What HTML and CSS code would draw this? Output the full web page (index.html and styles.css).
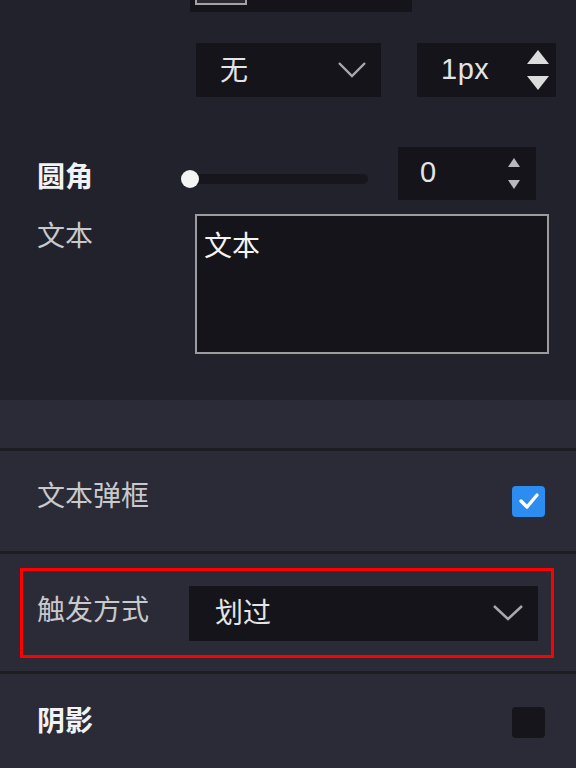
FILE: index.html
```html
<!DOCTYPE html>
<html lang="zh-CN">
<head>
  <meta charset="UTF-8">
  <meta name="viewport" content="width=device-width, initial-scale=1.0">
  <title>属性面板</title>
  <link rel="stylesheet" href="styles.css">
</head>
<body>
  <div class="panel">
    <div class="style-section">
      <div class="color-row">
        <div class="color-field">
          <span class="swatch"></span>
        </div>
      </div>

      <div class="border-row">
        <div class="select select-small">
          <span class="select-value">无</span>
          <svg class="chevron" width="30" height="18" viewBox="0 0 30 18">
            <polyline points="2,2 15,15 28,2" fill="none" stroke="#a9a9ad" stroke-width="2.4"/>
          </svg>
        </div>
        <div class="number number-wide">
          <span class="number-value">1px</span>
          <div class="spinner">
            <svg width="24" height="16" viewBox="0 0 24 16"><polygon points="12,1 23,15 1,15" fill="#dcdcdc"/></svg>
            <svg width="24" height="16" viewBox="0 0 24 16"><polygon points="1,1 23,1 12,15" fill="#dcdcdc"/></svg>
          </div>
        </div>
      </div>

      <div class="field-row radius-row">
        <label class="label strong">圆角</label>
        <div class="slider">
          <span class="slider-thumb"></span>
        </div>
        <div class="number number-radius">
          <span class="number-value">0</span>
          <div class="spinner spinner-small">
            <svg width="12" height="9" viewBox="0 0 12 9"><polygon points="6,0 12,9 0,9" fill="#b9b9bd"/></svg>
            <svg width="12" height="9" viewBox="0 0 12 9"><polygon points="0,0 12,0 6,9" fill="#b9b9bd"/></svg>
          </div>
        </div>
      </div>

      <div class="field-row text-row">
        <label class="label">文本</label>
        <div class="textarea">文本</div>
      </div>
    </div>

    <div class="band"></div>

    <div class="option-row">
      <span class="label">文本弹框</span>
      <span class="checkbox checked">
        <svg width="22" height="18" viewBox="0 0 22 18">
          <polyline points="3,9 9,15 19,3" fill="none" stroke="#fff" stroke-width="3.4" stroke-linecap="round" stroke-linejoin="round"/>
        </svg>
      </span>
    </div>

    <div class="option-row trigger-row">
      <div class="highlight">
        <span class="label">触发方式</span>
        <div class="select select-trigger">
          <span class="select-value">划过</span>
          <svg class="chevron" width="32" height="18" viewBox="0 0 32 18">
            <polyline points="2,2 16,15 30,2" fill="none" stroke="#a9a9ad" stroke-width="2.4"/>
          </svg>
        </div>
      </div>
    </div>

    <div class="option-row shadow-row">
      <span class="label strong">阴影</span>
      <span class="checkbox"></span>
    </div>
  </div>
</body>
</html>
```

FILE: styles.css
```css
* {
  margin: 0;
  padding: 0;
  box-sizing: border-box;
}
body {
  font-family: "Noto Sans CJK SC", "Noto Sans", sans-serif;
  background-color: #2b2b37;
  width: 576px;
  height: 768px;
  overflow: hidden;
}
.panel {
  width: 576px;
}
.style-section {
  background-color: #22222c;
  height: 400px;
}
.color-row {
  padding-left: 190px;
}
.color-field {
  width: 222px;
  height: 12px;
  background-color: #14141a;
  padding-left: 5px;
}
.swatch {
  display: block;
  width: 52px;
  height: 5px;
  background-color: #2a2a30;
  border: 2px solid #a3a3a6;
  border-top: none;
}
.border-row {
  display: flex;
  gap: 36px;
  margin-top: 31px;
  padding-left: 196px;
}
.select,
.number {
  display: flex;
  align-items: center;
  background-color: #14141a;
  height: 54px;
  color: #e4e4e6;
  font-size: 28px;
}
.select-value {
  line-height: 1;
  margin-top: -5px;
}
.select-small {
  width: 185px;
  padding: 0 14px 0 24px;
  justify-content: space-between;
}
.number-wide {
  width: 139px;
  padding: 0 6px 0 24px;
  justify-content: space-between;
}
.number-value {
  font-family: "Liberation Sans", Arial, sans-serif;
  font-size: 29px;
  letter-spacing: 0.5px;
  margin-top: -2px;
}
.spinner {
  display: flex;
  flex-direction: column;
  gap: 10px;
}
.spinner svg {
  display: block;
}
.field-row {
  display: flex;
  padding-left: 37px;
}
.label {
  font-size: 28px;
  line-height: 1;
  color: #c9c9cc;
}
.label.strong {
  color: #f2f2f4;
  font-weight: bold;
}
.radius-row {
  margin-top: 50px;
  align-items: center;
  height: 53px;
}
.radius-row .label {
  width: 144px;
  padding-top: 3px;
}
.slider {
  position: relative;
  width: 178px;
  height: 10px;
  margin-left: 9px;
  margin-top: 10px;
  background-color: #16161c;
  border-radius: 5px;
}
.slider-thumb {
  position: absolute;
  left: -9px;
  top: -4px;
  width: 18px;
  height: 18px;
  border-radius: 50%;
  background-color: #f4f4f4;
}
.number-radius {
  width: 138px;
  height: 53px;
  margin-left: 30px;
  padding: 0 16px 0 22px;
  justify-content: space-between;
}
.spinner-small {
  gap: 13px;
}
.text-row {
  margin-top: 14px;
}
.text-row .label {
  width: 158px;
  padding-top: 6px;
}
.textarea {
  width: 354px;
  height: 140px;
  background-color: #14141a;
  border: 2px solid #9c9ca0;
  color: #f4f4f4;
  font-size: 28px;
  padding: 14px 7px;
  line-height: 1;
}
.band {
  height: 48px;
  background-color: #2b2b37;
}
.option-row {
  display: flex;
  align-items: center;
  justify-content: space-between;
  background-color: #2b2b37;
  border-top: 3px solid #1d1d24;
  height: 103px;
  padding: 0 31px 0 37px;
}
.option-row .label {
  margin-top: -15px;
}
.checkbox {
  display: flex;
  align-items: center;
  justify-content: center;
  width: 33px;
  height: 31px;
  border-radius: 4px;
  background-color: #15151b;
}
.checkbox.checked {
  background-color: #2d8cf0;
}
.trigger-row {
  height: 120px;
  padding: 0 22px 0 20px;
  align-items: flex-start;
}
.highlight {
  display: flex;
  align-items: center;
  width: 534px;
  height: 90px;
  margin-top: 14px;
  border: 3px solid #ff0000;
  padding: 0 13px 0 14px;
}
.highlight .label {
  width: 152px;
  margin-top: -10px;
}
.select-trigger {
  width: 349px;
  height: 55px;
  padding: 0 14px 0 26px;
  justify-content: space-between;
}
.shadow-row {
  height: 95px;
  align-items: flex-start;
  padding-top: 31px;
}
.shadow-row .label {
  margin-top: 0;
}
.shadow-row .checkbox {
  margin-top: 2px;
}
```
